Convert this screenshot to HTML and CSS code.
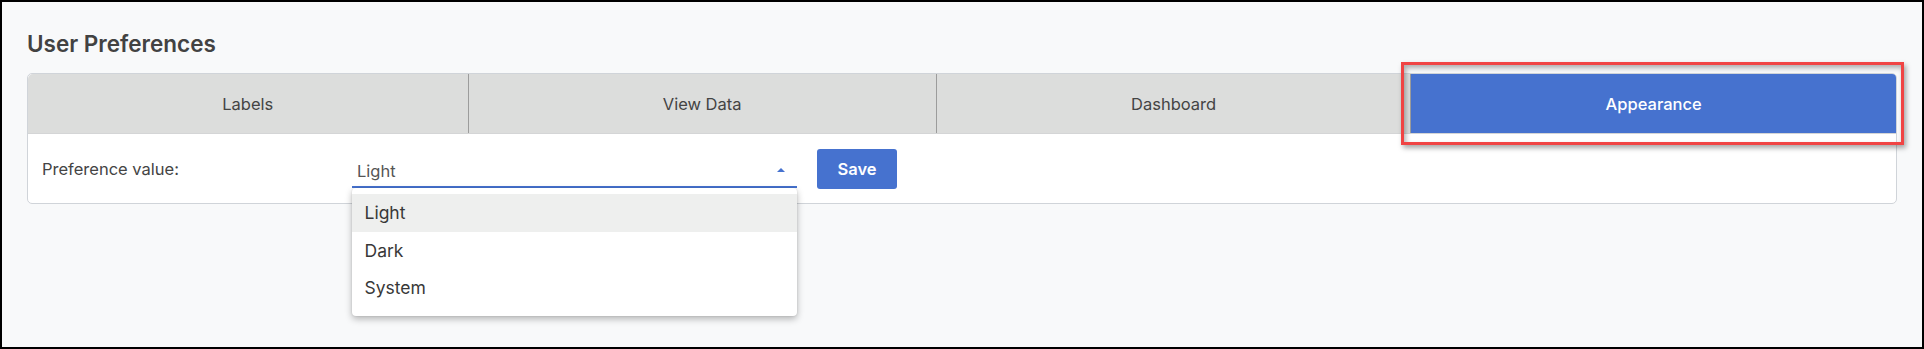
FILE: index.html
```html
<!DOCTYPE html>
<html lang="en">
<head>
<meta charset="utf-8">
<title>User Preferences</title>
<link rel="stylesheet" href="styles.css">
</head>
<body>
<main class="page">
  <h1 class="title">User Preferences</h1>
  <section class="card">
    <nav class="tabs">
      <div class="tab first">Labels</div>
      <div class="tab">View Data</div>
      <div class="tab">Dashboard</div>
      <div class="tab active">Appearance<span class="annot"></span></div>
    </nav>
    <div class="body">
      <div class="row">
        <label class="label">Preference value:</label>
        <div class="select">
          <span class="value">Light</span>
          <span class="caret"></span>
          <ul class="menu">
            <li class="opt current">Light</li>
            <li class="opt">Dark</li>
            <li class="opt">System</li>
          </ul>
        </div>
        <button class="save">Save</button>
      </div>
    </div>
  </section>
</main>
</body>
</html>
```
FILE: styles.css
```css
* { box-sizing: border-box; }
html, body { margin: 0; padding: 0; }
body {
  width: 1924px;
  height: 349px;
  border: 2px solid #000;
  background: #f8f9fa;
  font-family: Inter, "Noto Sans", sans-serif;
  color: #444;
  overflow: hidden;
}
.page {
  padding: 28px 25px 0 25px;
}
.title {
  margin: 0 0 16px 0;
  font-size: 22.5px;
  line-height: 27px;
  font-weight: 600;
  color: #424242;
}
.card {
  background: #fff;
  border: 1px solid #d0d4d9;
  border-radius: 5px;
}
.tabs {
  display: flex;
  height: 60px;
  border-bottom: 1px solid #d4d5d6;
  border-radius: 5px 5px 0 0;
  background: #dcdddc;
}
.tab {
  flex: 1 1 auto;
  display: flex;
  align-items: center;
  justify-content: center;
  font-size: 16.5px;
  color: #444;
  border-left: 1px solid #9c9c9c;
}
.tab.first {
  border-left: none;
  border-top-left-radius: 5px;
}
.tab.active {
  position: relative;
  background: #4672cf;
  color: #fff;
  font-weight: 500;
  border-top-right-radius: 4px;
}
.annot {
  position: absolute;
  left: -10px;
  top: -12px;
  right: -8px;
  bottom: -12px;
  border: 3px solid #f04444;
  box-shadow: 2px 3px 5px rgba(0, 0, 0, 0.35), inset 2px 3px 5px rgba(0, 0, 0, 0.3);
  pointer-events: none;
}
.body {
  padding: 15px 14px 14px 14px;
}
.row {
  display: flex;
  align-items: center;
  height: 40px;
}
.label {
  width: 310px;
  font-size: 16.5px;
  color: #444;
}
.select {
  position: relative;
  width: 445px;
  height: 38px;
  display: flex;
  align-items: flex-end;
  padding: 0 12px 5px 5px;
  border-bottom: 2px solid #4672cf;
}
.value {
  font-size: 16.5px;
  line-height: 20px;
  color: #555;
}
.caret {
  margin-left: auto;
  margin-bottom: 9px;
  width: 0;
  height: 0;
  border-left: 4.5px solid transparent;
  border-right: 4.5px solid transparent;
  border-bottom: 4.5px solid #4672cf;
}
.menu {
  position: absolute;
  left: 0;
  top: calc(100% + 1.5px);
  width: 445px;
  margin: 0;
  padding: 6.5px 0 9.5px 0;
  list-style: none;
  background: #fff;
  border-radius: 4px;
  box-shadow: 0 3px 7px rgba(0, 0, 0, 0.28), 0 0 2px rgba(0, 0, 0, 0.12);
  z-index: 5;
}
.opt {
  height: 37.5px;
  line-height: 37.5px;
  padding-left: 12.5px;
  font-size: 17.5px;
  color: #383838;
}
.opt.current {
  background: #eeefee;
}
.save {
  margin-left: 20px;
  width: 80px;
  height: 40px;
  border: none;
  border-radius: 3px;
  background: #4672cf;
  color: #fff;
  font-family: Inter, "Noto Sans", sans-serif;
  font-size: 16.5px;
  font-weight: 600;
  padding: 0;
}
```
